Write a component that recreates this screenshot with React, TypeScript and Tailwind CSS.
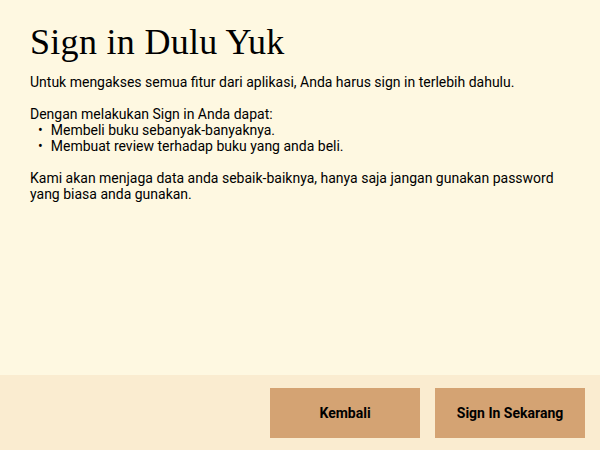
import React from 'react';

const App: React.FC = () => {
  return (
    <div className="w-[600px] h-[450px] flex flex-col bg-[#fef8e1] text-black">
      <div className="flex-1 px-[30px] pt-[22px]">
        <h1 className="text-[36px] leading-[40px] font-['Liberation_Serif',serif] font-normal tracking-[0.3px]">
          Sign in Dulu Yuk
        </h1>
        <div className="mt-[12px] text-[14px] leading-[16px] font-['Roboto',sans-serif]">
          <p>Untuk mengakses semua fitur dari aplikasi, Anda harus sign in terlebih dahulu.</p>
          <p className="mt-[16px]">Dengan melakukan Sign in Anda dapat:</p>
          <ul className="pl-[8px]">
            <li className="flex gap-[8px]"><span>•</span><span>Membeli buku sebanyak-banyaknya.</span></li>
            <li className="flex gap-[8px]"><span>•</span><span>Membuat review terhadap buku yang anda beli.</span></li>
          </ul>
          <p className="mt-[16px]">
            Kami akan menjaga data anda sebaik-baiknya, hanya saja jangan gunakan password yang biasa anda gunakan.
          </p>
        </div>
      </div>
      {/* footer */}
      <div className="h-[75px] bg-[#faecd0] flex justify-end items-start gap-[15px] pt-[13px] pr-[15px]">
        <button className="w-[150px] h-[50px] bg-[#d4a373] text-[14px] font-bold font-['Roboto',sans-serif]">
          Kembali
        </button>
        <button className="w-[150px] h-[50px] bg-[#d4a373] text-[14px] font-bold font-['Roboto',sans-serif]">
          Sign In Sekarang
        </button>
      </div>
    </div>
  );
};

export default App;
